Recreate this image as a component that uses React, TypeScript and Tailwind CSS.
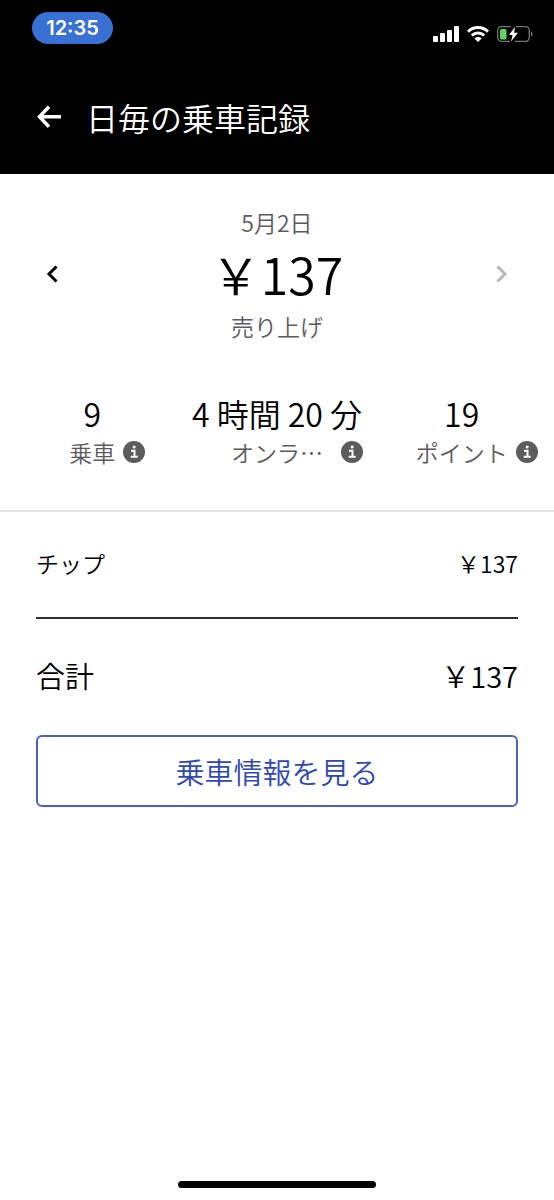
import React from 'react';

interface StatProps {
  value: string;
  label: string;
  labelWidth?: string;
}

const InfoIcon: React.FC = () => (
  <svg className="w-[22px] h-[22px]" viewBox="0 0 22 22" aria-hidden="true">
    <circle cx="11" cy="11" r="11" fill="#5c5c5c" />
    <circle cx="11.2" cy="5.9" r="1.5" fill="#fff" />
    <path d="M8 9.7h3.5v6M7.7 15.7h7" fill="none" stroke="#fff" strokeWidth="2" />
  </svg>
);

const StatusIcons: React.FC = () => (
  <div className="flex items-center gap-2">
    <svg className="w-[26px] h-4" viewBox="0 0 26 16" fill="#fff" aria-hidden="true">
      <rect x="0" y="10" width="5" height="6" rx="1" />
      <rect x="7" y="7" width="5" height="9" rx="1" />
      <rect x="14" y="4" width="5" height="12" rx="1" />
      <rect x="21" y="0" width="5" height="16" rx="1" />
    </svg>
    <svg className="w-[22px] h-4" viewBox="0 0 22 16" fill="none" stroke="#fff" aria-hidden="true">
      <path d="M1 5.6a14.4 14.4 0 0 1 20 0" strokeWidth="3" />
      <path d="M4.8 9.5a8.9 8.9 0 0 1 12.4 0" strokeWidth="2.8" />
      <path d="M11 16l-3.6-3.5a5.2 5.2 0 0 1 7.2 0z" fill="#fff" stroke="none" />
    </svg>
    <svg className="w-9 h-4" viewBox="0 0 36 16" fill="none" aria-hidden="true">
      <path
        d="M14 .7H4.5A3.8 3.8 0 0 0 .7 4.5v7a3.8 3.8 0 0 0 3.8 3.8H13M19 .7h9.5a3.8 3.8 0 0 1 3.8 3.8v7a3.8 3.8 0 0 1-3.8 3.8H18"
        stroke="#77777a"
        strokeWidth="1.3"
      />
      <path d="M34 5.3c2 1 2 4.4 0 5.4z" fill="#77777a" />
      <rect x="3" y="3" width="6.5" height="10.5" rx="1.6" fill="#62d261" />
      <path d="M18 .8l-6 8.2h3.6L14 15.4l7-8.6h-3.9z" fill="#fff" />
    </svg>
  </div>
);

const Stat: React.FC<StatProps> = ({ value, label, labelWidth = '' }) => (
  <div className="flex flex-col items-center">
    <p className="text-[32px] leading-[42px] text-black whitespace-nowrap">{value}</p>
    <div className="grid grid-cols-[1fr_auto_1fr] items-center gap-2 w-full">
      <span className={`col-start-2 text-center text-[23px] leading-9 text-[#5c5c5c] whitespace-nowrap ${labelWidth}`}>
        {label}
      </span>
      <button type="button" aria-label={label} className="justify-self-start">
        <InfoIcon />
      </button>
    </div>
  </div>
);

export default function App() {
  return (
    <div
      lang="ja"
      className="min-h-screen flex flex-col bg-white text-black font-['Noto_Sans_CJK_JP_DemiLight','Noto_Sans_CJK_JP',sans-serif] font-light"
    >
      <header className="bg-black text-white pt-3 pb-[34px]">
        <div className="flex items-end justify-between pl-8 pr-[21px]">
          <span className="flex h-8 w-[81px] items-center justify-center rounded-full bg-[#3871d3] font-['Inter',sans-serif] text-xl font-semibold">
            12:35
          </span>
          <div className="pb-0.5">
            <StatusIcons />
          </div>
        </div>
        <div className="flex items-center gap-6 pt-[50px] pl-9">
          <button type="button" aria-label="戻る">
            <svg className="w-[26px] h-6" viewBox="0 0 26 24" fill="none" stroke="#fff" strokeWidth="3.4" aria-hidden="true">
              <path d="M13 1.8L3.4 11.8L13 21.8M3.4 11.8H25" />
            </svg>
          </button>
          <h1 className="text-[32px] leading-[46px]">日毎の乗車記録</h1>
        </div>
      </header>

      <main>
        <section className="border-b-2 border-[#e5e5e5] pt-[31px] pb-10">
          <div className="flex items-center justify-between px-11">
            <button type="button" aria-label="前の日">
              <svg className="w-4 h-5" viewBox="0 0 16 20" fill="none" stroke="#000" strokeWidth="3" aria-hidden="true">
                <path d="M12.5 2.5L5 10l7.5 7.5" />
              </svg>
            </button>
            <div className="text-center">
              <p className="text-[23px] leading-[34px] text-[#5c5c5c]">5月2日</p>
              <p className="mb-0.5 text-[50px] leading-[68px] font-normal">{'\uFFE5'}137</p>
              <p className="text-[23px] leading-[34px] text-[#5c5c5c]">売り上げ</p>
            </div>
            <button type="button" aria-label="次の日" disabled>
              <svg className="w-4 h-5" viewBox="0 0 16 20" fill="none" stroke="#b8b8b8" strokeWidth="3" aria-hidden="true">
                <path d="M3.5 2.5L11 10l-7.5 7.5" />
              </svg>
            </button>
          </div>
          <div className="grid grid-cols-3 pt-[49px]">
            <Stat value="9" label="乗車" />
            <Stat value="4 時間 20 分" label="オンラ…" labelWidth="w-28" />
            <Stat value="19" label="ポイント" />
          </div>
        </section>

        <section className="px-9">
          <div className="flex items-center justify-between border-b-2 border-[#2f2f2f] pt-[33px] pb-9 text-[23px] leading-9">
            <span>チップ</span>
            <span>{'\uFFE5'}137</span>
          </div>
          <div className="flex items-center justify-between pt-[34px] pb-[38px] text-[29px] leading-[44px]">
            <span>合計</span>
            <span>{'\uFFE5'}137</span>
          </div>
          <button
            type="button"
            className="w-full rounded-md border-2 border-[#4a62bb] py-3 text-[29px] leading-[44px] text-[#3048b0]"
          >
            乗車情報を見る
          </button>
        </section>
      </main>

      <div className="mx-auto mt-auto mb-3 h-[7px] w-[198px] rounded-full bg-black" />
    </div>
  );
}
